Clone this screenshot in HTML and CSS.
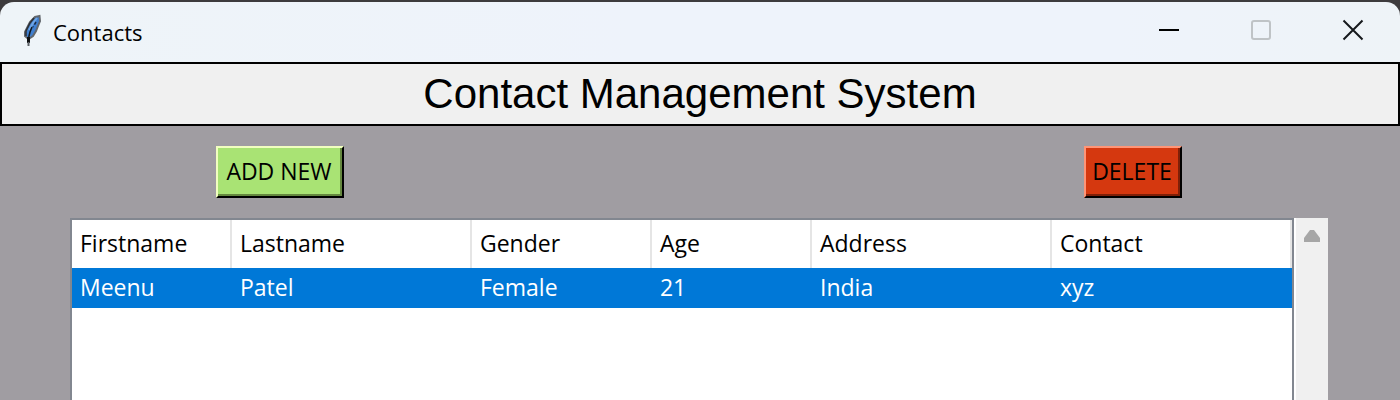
FILE: index.html
```
<!DOCTYPE html>
<html lang="en">
<head>
<meta charset="utf-8">
<title>Contacts</title>
<link rel="stylesheet" href="styles.css">
</head>
<body>
<div class="window">
  <header class="titlebar">
    <svg class="feather" width="20" height="34" viewBox="0 0 20 34" aria-hidden="true">
      <path d="M17.500 2 L13 3 L8 8 L5 14 L3 18 V22 L6.500 25 L11 22 L14 17 L16 12 L18 7 Z" fill="#3f7fd0" stroke="#62676d" stroke-width="2"/>
      <path d="M12 4 L8 9 L4 17 V22" fill="none" stroke="#2c3138" stroke-width="1.500"/>
      <path d="M15 4 L11 9 L7 16" fill="none" stroke="#6fa6e6" stroke-width="2"/>
      <path d="M14 8 L11 13" fill="none" stroke="#1c2a40" stroke-width="1.500" stroke-dasharray="3 2"/>
      <path d="M10 13 L8 18 L7 22 L6.500 25" fill="none" stroke="#101820" stroke-width="1.500"/>
      <path d="M6.500 23 V29" fill="none" stroke="#0c0e10" stroke-width="3"/>
      <path d="M6.500 28 V32" fill="none" stroke="#5a5f64" stroke-width="2"/>
    </svg>
    <span class="caption">Contacts</span>
    <div class="controls">
      <button class="control" type="button" aria-label="Minimize">
        <svg width="22" height="22" viewBox="0 0 22 22"><path d="M1 11H21" stroke="#000" stroke-width="2"/></svg>
      </button>
      <button class="control" type="button" aria-label="Maximize" disabled>
        <svg width="22" height="22" viewBox="0 0 22 22"><rect x="2" y="2" width="18" height="18" rx="2" fill="none" stroke="#bfc3c6" stroke-width="2"/></svg>
      </button>
      <button class="control" type="button" aria-label="Close">
        <svg width="22" height="22" viewBox="0 0 22 22"><path d="M1.500 1.500L20.500 20.500M20.500 1.500L1.500 20.500" stroke="#15181c" stroke-width="2"/></svg>
      </button>
    </div>
  </header>
  <main class="content">
    <h1 class="heading">Contact Management System</h1>
    <div class="toolbar">
      <button class="action add" type="button">ADD NEW</button>
      <button class="action delete" type="button">DELETE</button>
    </div>
    <section class="list">
      <div class="sheet">
        <table class="contacts">
          <colgroup>
            <col class="w160"><col class="w240"><col class="w180"><col class="w160"><col class="w240"><col class="w240">
          </colgroup>
          <thead>
            <tr><th>Firstname</th><th>Lastname</th><th>Gender</th><th>Age</th><th>Address</th><th>Contact</th></tr>
          </thead>
          <tbody>
            <tr><td>Meenu</td><td>Patel</td><td>Female</td><td>21</td><td>India</td><td>xyz</td></tr>
          </tbody>
        </table>
      </div>
      <div class="scrollbar">
        <button class="scroll-up" type="button" aria-label="Scroll up">
          <svg width="16" height="12" viewBox="0 0 16 12"><path d="M6 0H10L16 8V12H0V8Z" fill="#a6a6a6"/></svg>
        </button>
      </div>
    </section>
  </main>
</div>
</body>
</html>
```
FILE: styles.css
```
* {
  box-sizing: border-box;
}

body {
  margin: 0;
  background: #3d3b3d;
  color: #000;
  font-family: "Open Sans", "Noto Sans", sans-serif;
  font-size: 23px;
}

.window {
  display: flex;
  flex-direction: column;
  min-height: 100vh;
  padding-top: 2px;
}

.titlebar {
  display: flex;
  align-items: center;
  height: 60px;
  padding-left: 22px;
  border-radius: 14px 14px 0 0;
  background: linear-gradient(90deg, #eef4f8 0%, #eef3fb 45%, #eef3fb 80%, #eef3f7 100%);
}

.feather {
  margin-right: 11px;
  margin-bottom: 2px;
}

.caption {
  font-size: 22px;
  line-height: 32px;
}

.controls {
  display: flex;
  align-self: flex-start;
  margin-left: auto;
  padding-right: 1px;
}

.control {
  display: flex;
  align-items: center;
  justify-content: center;
  width: 92px;
  height: 56px;
  padding: 0;
  border: 0;
  background: none;
}

.content {
  display: flex;
  flex: 1;
  flex-direction: column;
  background: #a09da2;
}

.heading {
  margin: 0;
  border: 2px solid #000;
  background: #f0f0f0;
  font-family: "Liberation Sans", Arial, sans-serif;
  font-size: 42px;
  font-weight: 400;
  line-height: 60px;
  text-align: center;
}

.toolbar {
  display: flex;
  justify-content: space-between;
  padding: 20px 218px 20px 216px;
}

.action {
  height: 52px;
  padding: 0 2px 2px 0;
  border: 2px solid;
  border-right-color: #000;
  border-bottom-color: #000;
  color: #000;
  font-family: inherit;
  font-size: 23px;
  line-height: 46px;
}

.add {
  width: 128px;
  border-top-color: #f1ffc0;
  border-left-color: #f1ffc0;
  background: #a9e374;
  box-shadow: inset -2px -2px #65883f;
}

.delete {
  width: 98px;
  border-top-color: #ff9577;
  border-left-color: #ff9577;
  background: #d5380f;
  box-shadow: inset -2px -2px #7f2008;
}

.list {
  display: flex;
  flex: 1;
  padding: 0 72px 0 70px;
}

.sheet {
  flex: 1;
  border: 2px solid #828790;
  border-bottom: 0;
  background: #fff;
}

.contacts {
  width: 100%;
  border-collapse: collapse;
  table-layout: fixed;
}

.w160 {
  width: 13.115%;
}

.w180 {
  width: 14.754%;
}

.w240 {
  width: 19.672%;
}

.contacts th,
.contacts td {
  padding: 0 0 2px 8px;
  font-weight: 400;
  text-align: left;
}

.contacts th {
  height: 48px;
  background: linear-gradient(#e5e5e5, #e5e5e5) right / 2px 100% no-repeat;
}

.contacts td {
  height: 40px;
  background: #0078d7;
  color: #fff;
}

.scrollbar {
  width: 34px;
  border-left: 2px solid #fff;
  background: #f0f0f0;
}

.scroll-up {
  display: flex;
  align-items: center;
  justify-content: center;
  width: 32px;
  height: 36px;
  padding: 0;
  border: 0;
  background: none;
}
```
